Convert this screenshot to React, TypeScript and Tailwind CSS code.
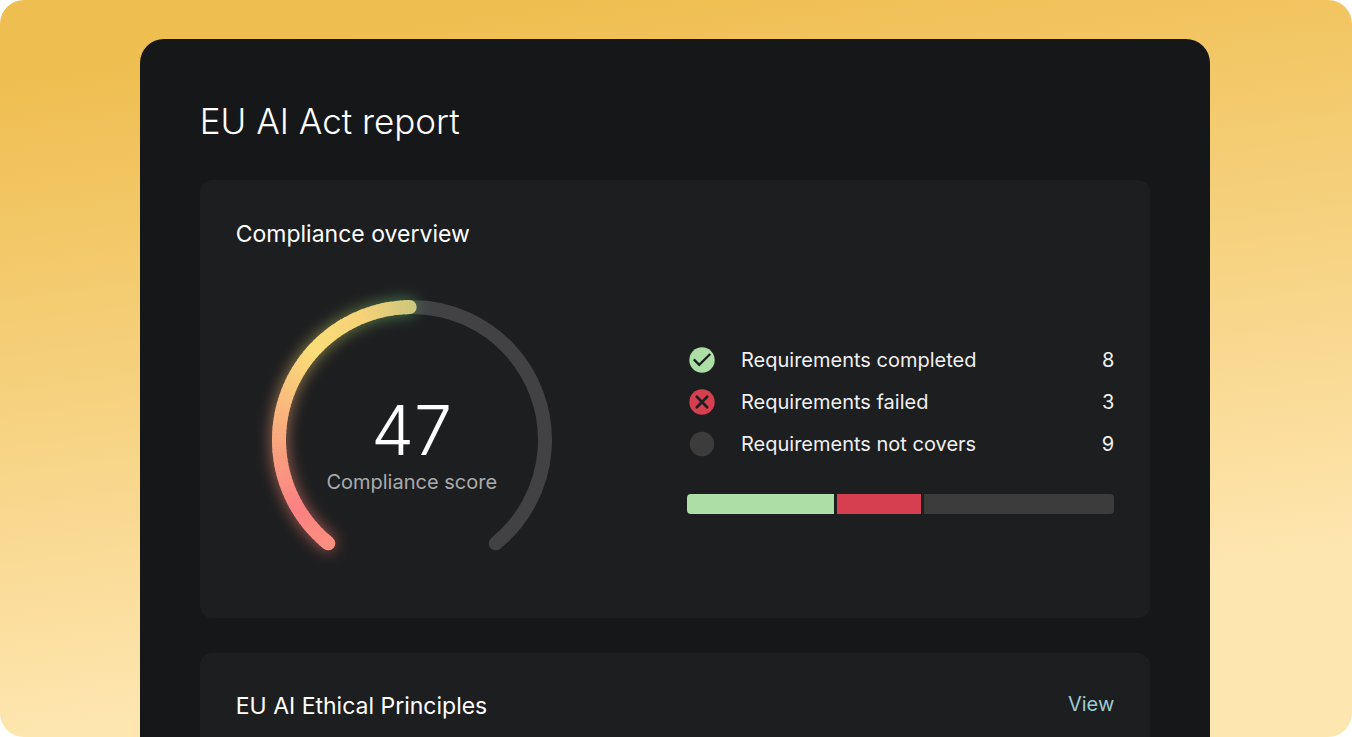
import React from "react";

type Stop = [number, number, number, number];

const CX = 140;
const CY = 140;
const R = 133;
const START = -141;
const END = 141;
const SCORE_ANGLE = -1;

const arcStops: Stop[] = [
  [0, 251, 143, 126],
  [0.14, 251, 128, 132],
  [0.36, 249, 166, 126],
  [0.5, 249, 190, 124],
  [0.66, 250, 221, 120],
  [0.85, 247, 210, 120],
  [1, 208, 200, 124],
];

const glowStops: Stop[] = [
  [0, 251, 125, 110],
  [0.25, 251, 140, 115],
  [0.5, 240, 175, 110],
  [0.66, 225, 205, 100],
  [0.85, 150, 190, 100],
  [1, 90, 180, 115],
];

function colorAt(stops: Stop[], t: number) {
  let i = 0;
  while (i < stops.length - 2 && t > stops[i + 1][0]) i++;
  const a = stops[i];
  const b = stops[i + 1];
  const k = Math.min(1, Math.max(0, (t - a[0]) / (b[0] - a[0])));
  const mix = (n: 1 | 2 | 3) => Math.round(a[n] + (b[n] - a[n]) * k);
  return `rgb(${mix(1)},${mix(2)},${mix(3)})`;
}

function point(deg: number) {
  const rad = (deg * Math.PI) / 180;
  return `${(CX + R * Math.sin(rad)).toFixed(2)} ${(CY - R * Math.cos(rad)).toFixed(2)}`;
}

function arc(from: number, to: number) {
  const large = to - from > 180 ? 1 : 0;
  return `M${point(from)} A${R} ${R} 0 ${large} 1 ${point(to)}`;
}

function GradientArc({ stops }: { stops: Stop[] }) {
  const count = 70;
  const step = (SCORE_ANGLE - START) / count;
  return (
    <>
      <path d={arc(START, START + step)} stroke={colorAt(stops, 0)} strokeLinecap="round" />
      <path d={arc(SCORE_ANGLE - step, SCORE_ANGLE)} stroke={colorAt(stops, 1)} strokeLinecap="round" />
      {Array.from({ length: count }, (_, i) => {
        const from = START + i * step;
        const to = Math.min(SCORE_ANGLE, from + step + 0.5);
        return <path key={i} d={arc(from, to)} stroke={colorAt(stops, (i + 0.5) / count)} />;
      })}
    </>
  );
}

function Gauge() {
  return (
    <div className="relative size-70 shrink-0">
      <svg viewBox="0 0 280 280" className="size-full overflow-visible" fill="none" strokeWidth="14" aria-hidden="true">
        <defs>
          <filter id="glow" x="-20%" y="-20%" width="140%" height="140%">
            <feGaussianBlur stdDeviation="8" />
          </filter>
        </defs>
        <path d={arc(START, END)} stroke="#424244" strokeLinecap="round" />
        <g filter="url(#glow)" opacity="0.65">
          <GradientArc stops={glowStops} />
        </g>
        <GradientArc stops={arcStops} />
      </svg>
      <div className="absolute inset-x-0 top-24 flex flex-col items-center">
        <span className="text-[68px] leading-17 font-light text-white">47</span>
        <span className="mt-1 text-xl leading-7 font-normal text-[#aaaaac]">Compliance score</span>
      </div>
    </div>
  );
}

function CheckIcon() {
  return (
    <svg viewBox="0 0 26 26" className="size-[26px]" fill="none" aria-hidden="true">
      <circle cx="13" cy="13" r="12.7" fill="#acdea6" />
      <path d="M4.8 12.4l5.4 5.4L21.2 7" stroke="#1d1e20" strokeWidth="2.3" />
    </svg>
  );
}

function CrossIcon() {
  return (
    <svg viewBox="0 0 26 26" className="size-[26px]" fill="none" aria-hidden="true">
      <circle cx="13" cy="13" r="12.7" fill="#d63f50" />
      <path d="M7.8 7.8l10.4 10.4M18.2 7.8L7.8 18.2" stroke="#1d1e20" strokeWidth="2.7" strokeLinecap="round" />
    </svg>
  );
}

function EmptyIcon() {
  return (
    <svg viewBox="0 0 26 26" className="size-[26px]" aria-hidden="true">
      <circle cx="13" cy="13" r="12.2" fill="#3c3c3c" />
    </svg>
  );
}

const requirements = [
  { label: "Requirements completed", value: 8, icon: <CheckIcon /> },
  { label: "Requirements failed", value: 3, icon: <CrossIcon /> },
  { label: "Requirements not covers", value: 9, icon: <EmptyIcon /> },
];

export default function App() {
  return (
    <div className="h-screen overflow-hidden rounded-3xl bg-[linear-gradient(172deg,#efbe50_8%,#f2c766_25%,#fee6b0_80%)] pt-[39px] pr-0.5 font-['Inter',sans-serif] text-[#f0f0f1]">
      <main className="mx-auto h-full w-[79.3%] rounded-t-3xl bg-[#161719] px-15 pt-15">
        <h1 className="text-[35px] leading-11 font-light text-white">EU AI Act report</h1>

        <section className="mt-[37px] rounded-xl bg-[#1d1e20] px-9 pt-9 pb-[38px]">
          <h2 className="text-[23px] leading-9 font-normal text-white">Compliance overview</h2>
          <div className="mt-12 grid grid-cols-2 items-center gap-6">
            <div className="pl-9">
              <Gauge />
            </div>
            <div className="pb-[27px]">
              <dl className="text-xl font-normal">
                {requirements.map((item) => (
                  <div key={item.label} className="flex h-[42px] items-center">
                    <dt className="flex flex-1 items-center gap-[26px] pl-0.5">
                      {item.icon}
                      {item.label}
                    </dt>
                    <dd>{item.value}</dd>
                  </div>
                ))}
              </dl>
              <div className="mt-[29px] flex h-5 gap-[3px] overflow-hidden rounded-sm">
                <div className="w-[147px] bg-[#acdea6]" />
                <div className="w-[84px] bg-[#d63f50]" />
                <div className="flex-1 bg-[#3c3c3c]" />
              </div>
            </div>
          </div>
        </section>

        <section className="mt-[35px] flex items-start justify-between rounded-xl bg-[#1d1e20] px-9 pt-[35px] pb-15">
          <h2 className="text-[23px] leading-9 font-normal text-white">EU AI Ethical Principles</h2>
          <a href="#principles" className="text-xl leading-8 text-[#9ccbd3]">
            View
          </a>
        </section>
      </main>
    </div>
  );
}
